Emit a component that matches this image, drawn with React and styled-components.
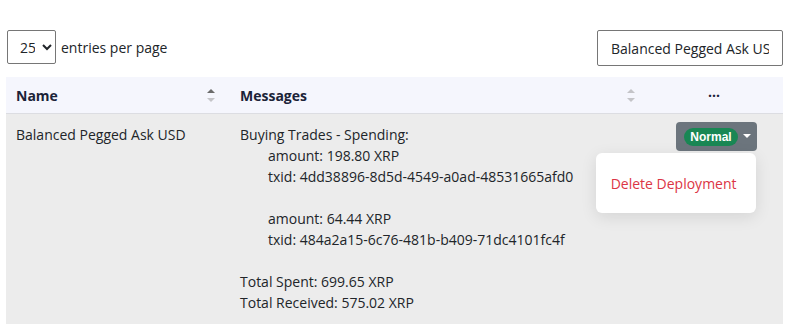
import React from 'react';
import styled, { createGlobalStyle } from 'styled-components';

const GlobalStyle = createGlobalStyle`
	html, body {
		margin: 0;
		padding: 0;
		background: #fff;
		font-family: "Open Sans", "Liberation Sans", sans-serif;
		font-size: 14px;
		color: #212529;
	}
`;

const Page = styled('div')`
	padding: 30px 8px 0 6px;
`;

const TopBar = styled('div')`
	display: flex;
	justify-content: space-between;
	align-items: flex-start;
	margin-bottom: 11px;
`;

const PerPage = styled('label')`
	display: flex;
	align-items: center;
	gap: 5px;
	padding-left: 1px;
`;

const Select = styled('select')`
	width: 49px;
	height: 34px;
	font-family: inherit;
	font-size: 14px;
	color: #212529;
	border: 1px solid #767676;
	border-radius: 2px;
	background: #fff;
	padding: 0 4px 0 8px;
`;

const Search = styled('input')`
	width: 186px;
	height: 36px;
	box-sizing: border-box;
	font-family: inherit;
	font-size: 14px;
	color: #212529;
	border: 1px solid #767676;
	border-radius: 2px;
	padding: 0 13px;
	outline: none;
`;

const Table = styled('div')`
	display: grid;
	grid-template-columns: 224px 420px 1fr;
`;

const HeadCell = styled('div')`
	height: 37px;
	box-sizing: border-box;
	background: #f5f6fd;
	border-bottom: 1px solid #dcdde2;
	display: flex;
	align-items: center;
	justify-content: ${p => (p.center ? 'center' : 'space-between')};
	padding: 0 15px 0 10px;
	font-weight: 700;
	color: #1b2338;
`;

const SortIcon = styled('span')`
	display: flex;
	flex-direction: column;
	gap: 5px;
`;

const Arrow = styled('i')`
	width: 0;
	height: 0;
	border-left: 4px solid transparent;
	border-right: 4px solid transparent;
	${p => (p.up ? 'border-bottom' : 'border-top')}: 4px solid ${p => p.color};
`;

const Cell = styled('div')`
	background: #ececec;
	padding: 10px 10px 11px;
	line-height: 21px;
	min-height: 209px;
	box-sizing: border-box;
	display: ${p => (p.center ? 'flex' : 'block')};
	justify-content: center;
	align-items: flex-start;
`;

const Line = styled('div')`
	padding-left: ${p => (p.indent ? '28px' : '0')};
	height: 21px;
	white-space: nowrap;
`;

const Dropdown = styled('div')`
	position: relative;
	margin-top: -2px;
`;

const Toggle = styled('button')`
	display: flex;
	align-items: center;
	gap: 5px;
	height: 29px;
	padding: 0 6px 0 8px;
	background: #6c757d;
	border: none;
	border-radius: 4px;
	cursor: pointer;
`;

const Badge = styled('span')`
	background: #198754;
	color: #fff;
	font-family: "Liberation Sans", Arial, sans-serif;
	font-weight: 700;
	font-size: 12px;
	line-height: 18px;
	padding: 0 6px;
	border-radius: 9px;
`;

const Caret = styled('i')`
	width: 0;
	height: 0;
	border-left: 4px solid transparent;
	border-right: 4px solid transparent;
	border-top: 4px solid #fff;
	margin-top: -2px;
`;

const Menu = styled('div')`
	position: absolute;
	top: 31px;
	right: 1px;
	width: 160px;
	height: 60px;
	box-sizing: border-box;
	background: #fff;
	border-radius: 6px;
	box-shadow: 0 4px 16px rgba(0, 0, 0, 0.1);
	display: flex;
	align-items: center;
	padding: 0 15px;
`;

const MenuItem = styled('span')`
	color: #dc3545;
	white-space: nowrap;
`;

const lines = [
	{ t: 'Buying Trades - Spending:' },
	{ t: 'amount: 198.80 XRP', indent: true },
	{ t: 'txid: 4dd38896-8d5d-4549-a0ad-48531665afd0', indent: true },
	{ t: '' },
	{ t: 'amount: 64.44 XRP', indent: true },
	{ t: 'txid: 484a2a15-6c76-481b-b409-71dc4101fc4f', indent: true },
	{ t: '' },
	{ t: 'Total Spent: 699.65 XRP' },
	{ t: 'Total Received: 575.02 XRP' },
];

export default function App() {
	return (
		<Page>
			<GlobalStyle />
			<TopBar>
				<PerPage>
					<Select defaultValue="25">
						<option>10</option>
						<option>25</option>
						<option>50</option>
					</Select>
					entries per page
				</PerPage>
				<Search readOnly value="Balanced Pegged Ask USD" />
			</TopBar>
			<Table>
				<HeadCell>
					Name
					<SortIcon>
						<Arrow up color="#6b6b6b" />
						<Arrow color="#c4c4c8" />
					</SortIcon>
				</HeadCell>
				<HeadCell>
					Messages
					<SortIcon>
						<Arrow up color="#c4c4c8" />
						<Arrow color="#c4c4c8" />
					</SortIcon>
				</HeadCell>
				<HeadCell center>···</HeadCell>

				<Cell>Balanced Pegged Ask USD</Cell>
				<Cell>
					{lines.map((l, i) => (
						<Line key={i} indent={l.indent}>{l.t}</Line>
					))}
				</Cell>
				<Cell center>
					<Dropdown>
						<Toggle>
							<Badge>Normal</Badge>
							<Caret />
						</Toggle>
						<Menu>
							<MenuItem>Delete Deployment</MenuItem>
						</Menu>
					</Dropdown>
				</Cell>
			</Table>
		</Page>
	);
}
